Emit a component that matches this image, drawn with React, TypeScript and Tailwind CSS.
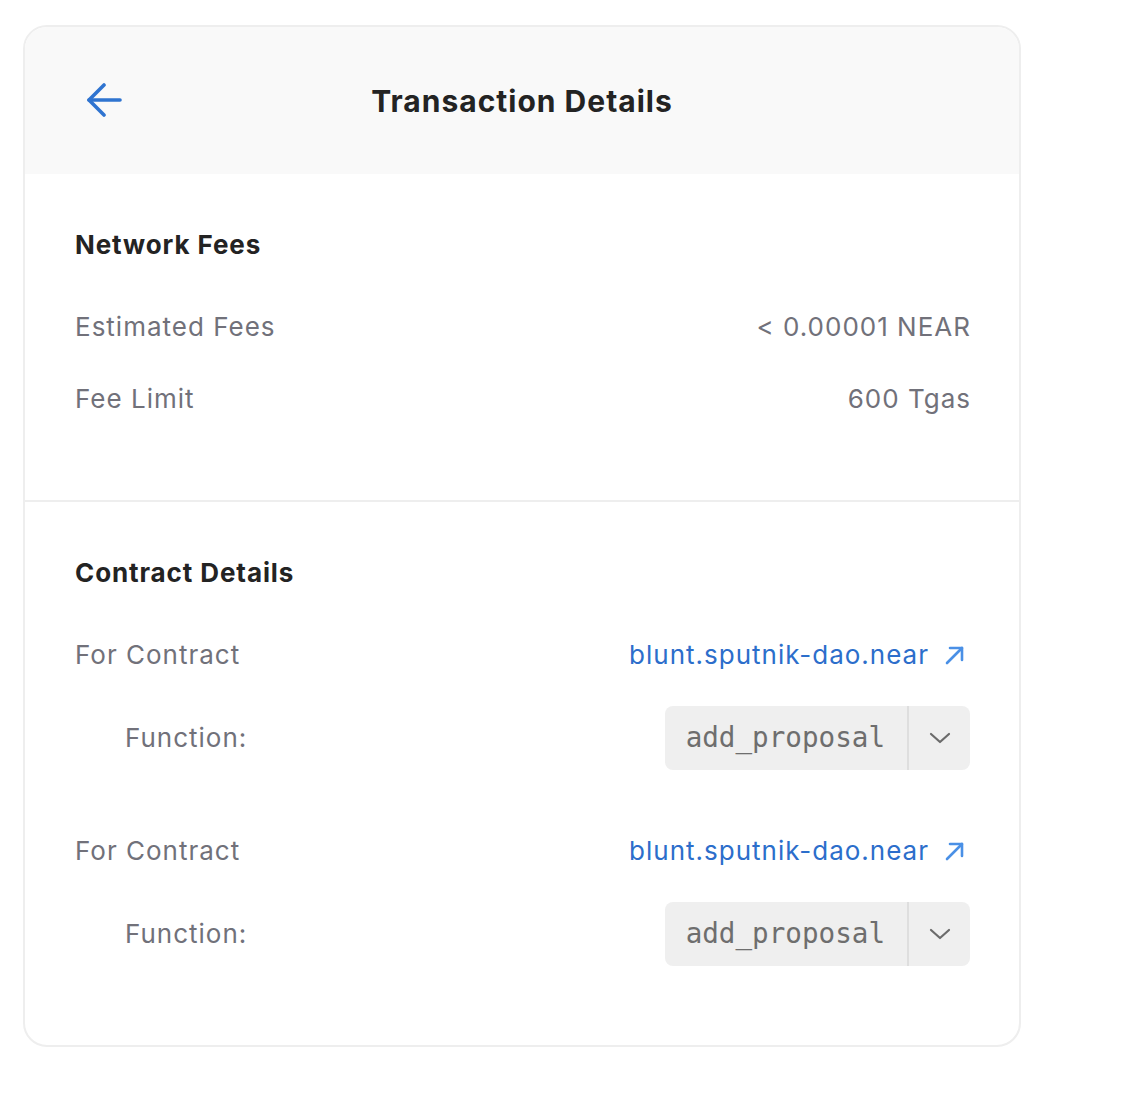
import React from "react";

const ArrowLeft = () => (
  <svg width="36" height="36" viewBox="0 0 36 36" fill="none" stroke="#2f74d0" strokeWidth="3.6" strokeLinecap="round" strokeLinejoin="round">
    <path d="M2 18 H33" />
    <path d="M17 3 L2 18 L17 33" />
  </svg>
);

const ExtArrow = () => (
  <svg width="22" height="22" viewBox="0 0 22 22" fill="none" stroke="#4a90e6" strokeWidth="2.6" strokeLinecap="round" strokeLinejoin="round">
    <path d="M3 19 L18 4" />
    <path d="M6 4 H18 V16" />
  </svg>
);

const Chevron = () => (
  <svg width="22" height="14" viewBox="0 0 22 14" fill="none" stroke="#6b6b6b" strokeWidth="2.2" strokeLinecap="round" strokeLinejoin="round">
    <path d="M2 3 L11 11 L20 3" />
  </svg>
);

const ContractBlock = ({ first }: { first?: boolean }) => (
  <div className={first ? "mt-[50px]" : "mt-[65px]"}>
    <div className="flex items-center justify-between h-[32px]">
      <span className="text-[26px] leading-[32px] tracking-[1px] text-[#71717a]">For Contract</span>
      <span className="flex items-center gap-[15px] pr-[4px]">
        <span className="text-[26px] leading-[32px] tracking-[1px] text-[#2c6ecb]">blunt.sputnik-dao.near</span>
        <ExtArrow />
      </span>
    </div>
    <div className="mt-[35px] flex items-center justify-between pl-[50px]">
      <span className="text-[26px] leading-[32px] tracking-[1px] text-[#71717a]">Function:</span>
      <div className="flex h-[64px] items-stretch rounded-[8px] bg-[#efefef]">
        <div
          className="flex items-center pl-[21px] pr-[22px] text-[27.6px] text-[#6e6e6e]"
          style={{ fontFamily: '"DejaVu Sans Mono", "Liberation Mono", monospace' }}
        >
          add_proposal
        </div>
        <div className="w-[2px] bg-[#dedede]" />
        <div className="flex w-[61px] items-center justify-center">
          <Chevron />
        </div>
      </div>
    </div>
  </div>
);

export default function App() {
  return (
    <div
      className="min-h-screen bg-white pl-[23px] pt-[25px]"
      style={{ fontFamily: 'Inter, "Noto Sans", sans-serif' }}
    >
      <div className="flex h-[1022px] w-[998px] flex-col overflow-hidden rounded-[24px] border-2 border-[#eeeeee] bg-white">
        <div className="relative flex h-[147px] items-center justify-center bg-[#f9f9f9]">
          <div className="absolute left-[62px] top-[55px]">
            <ArrowLeft />
          </div>
          <h1 className="text-[30px] font-bold leading-[40px] tracking-[1px] text-[#232323]">Transaction Details</h1>
        </div>

        <div className="h-[328px] border-b-2 border-[#eeeeee] pl-[50px] pr-[48px] pt-[55px]">
          <h2 className="text-[26px] font-bold leading-[32px] tracking-[0.9px] text-[#232323]">Network Fees</h2>
          <div className="mt-[50px] flex h-[32px] items-center justify-between text-[26px] leading-[32px] tracking-[1px] text-[#71717a]">
            <span>Estimated Fees</span>
            <span>&lt; 0.00001 NEAR</span>
          </div>
          <div className="mt-[40px] flex h-[32px] items-center justify-between text-[26px] leading-[32px] tracking-[1px] text-[#71717a]">
            <span>Fee Limit</span>
            <span>600 Tgas</span>
          </div>
        </div>

        <div className="flex-1 pl-[50px] pr-[49px] pt-[55px]">
          <h2 className="text-[26px] font-bold leading-[32px] tracking-[0.9px] text-[#232323]">Contract Details</h2>
          <ContractBlock first />
          <ContractBlock />
        </div>
      </div>
    </div>
  );
}
